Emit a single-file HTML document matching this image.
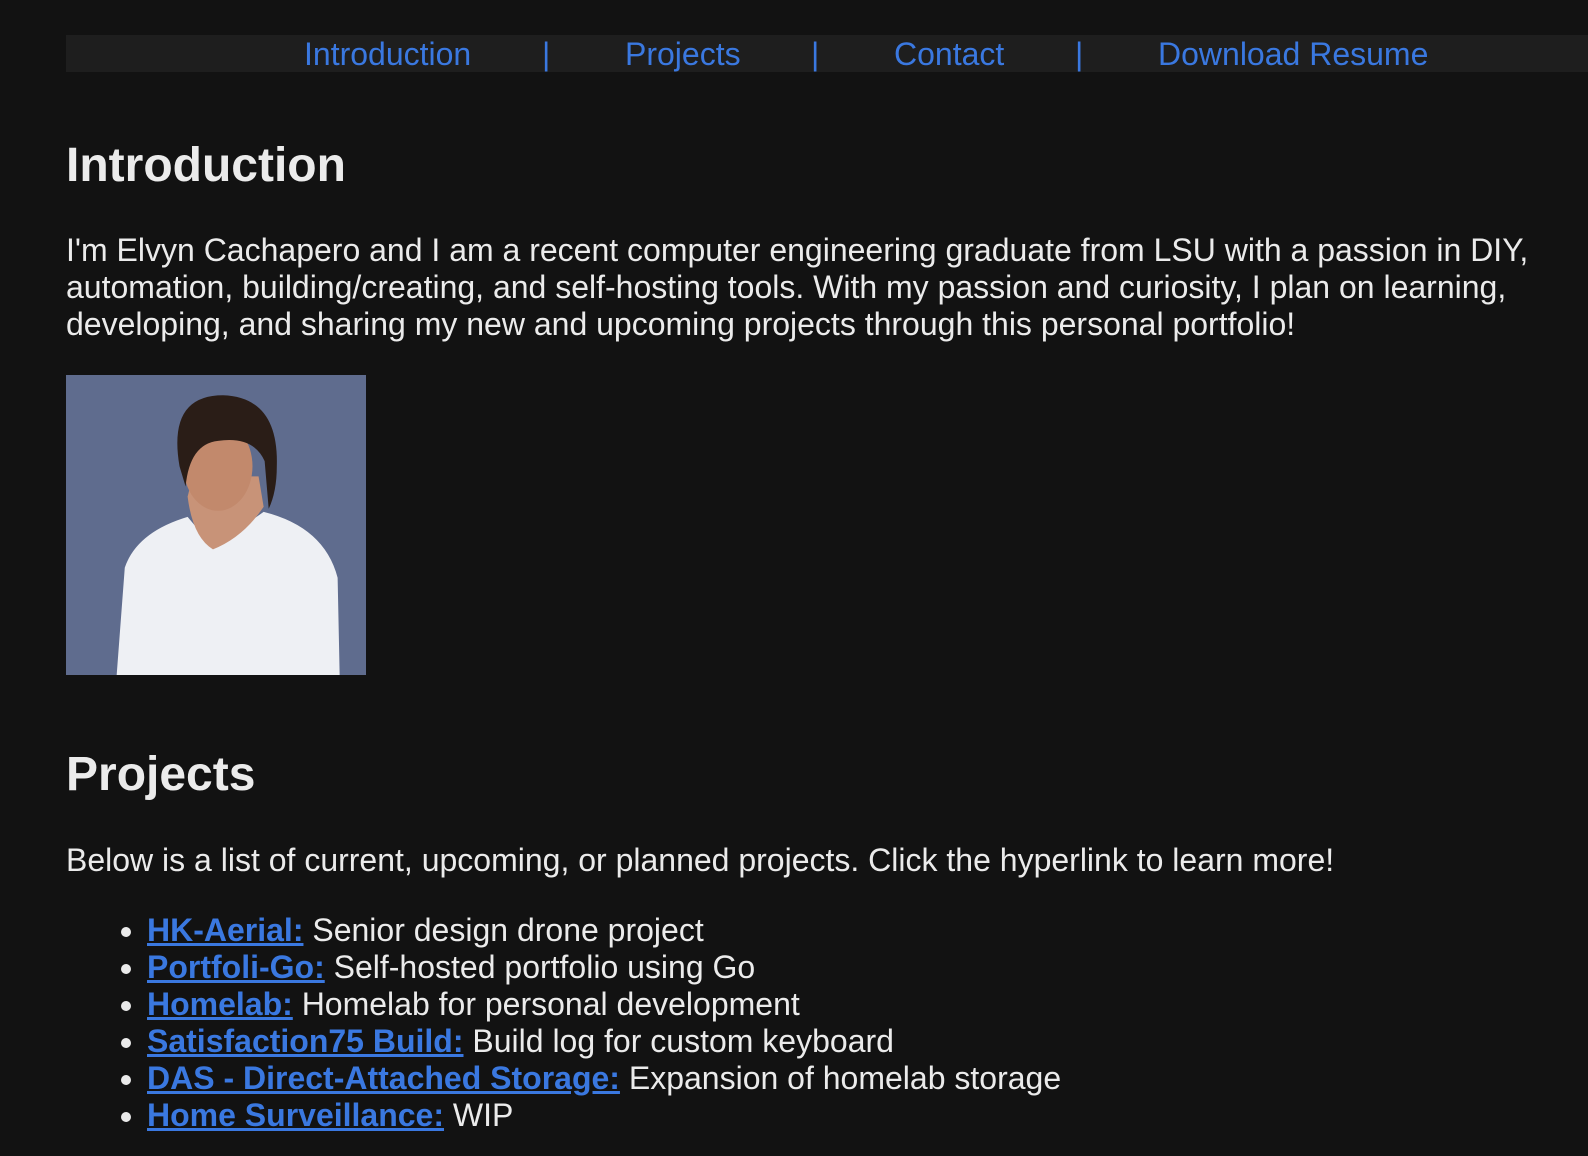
<!DOCTYPE html>
<html><head><meta charset="utf-8"><style>
body{margin:0;background:#121212;width:1588px;height:1156px;overflow:hidden;font-family:"Liberation Sans",Arial,sans-serif;color:#ebebeb;position:relative}
.a{position:absolute;white-space:nowrap}
.nav{position:absolute;left:66px;top:35px;width:1522px;height:37px;background:#1e1e1e}
.nl{color:#3a78e0;font-size:32px;top:36px}
h1{position:absolute;margin:0;font-size:48px;font-weight:bold;left:66px}
p{position:absolute;margin:0;left:66px;font-size:32px;line-height:37px}
ul{position:absolute;margin:0;padding:0 0 0 81px;left:66px;top:912px;font-size:32px;line-height:37px}
ul a{color:#3a78e0;font-weight:bold;text-decoration:underline}
</style></head><body>
<div class="nav"></div>
<div class="a nl" style="left:304px">Introduction</div>
<div class="a nl" style="left:542px">|</div>
<div class="a nl" style="left:625px">Projects</div>
<div class="a nl" style="left:811px">|</div>
<div class="a nl" style="left:894px">Contact</div>
<div class="a nl" style="left:1075px">|</div>
<div class="a nl" style="left:1158px">Download Resume</div>
<h1 style="top:138px">Introduction</h1>
<p style="top:232px;width:1470px">I'm Elvyn Cachapero and I am a recent computer engineering graduate from LSU with a passion in DIY, automation, building/creating, and self-hosting tools. With my passion and curiosity, I plan on learning, developing, and sharing my new and upcoming projects through this personal portfolio!</p>
<svg class="a" style="left:66px;top:375px" width="300" height="300" viewBox="0 0 296 296">
<rect width="296" height="296" fill="#5f6c8e"/>
<path d="M50 296 L58 190 Q70 155 120 140 L145 170 L195 135 Q255 150 268 200 L270 296Z" fill="#eef0f4"/>
<path d="M120 120 Q125 160 145 172 Q175 160 195 130 L190 100 L125 100Z" fill="#c89378"/>
<ellipse cx="150" cy="90" rx="34" ry="44" fill="#c2896c"/>
<path d="M112 90 Q100 20 155 20 Q210 22 208 90 Q208 115 200 132 L196 85 Q185 60 150 65 Q122 68 118 110Z" fill="#2a1d17"/>
</svg>
<h1 style="top:747px">Projects</h1>
<p style="top:842px">Below is a list of current, upcoming, or planned projects. Click the hyperlink to learn more!</p>
<ul>
<li><a>HK-Aerial:</a> Senior design drone project</li>
<li><a>Portfoli-Go:</a> Self-hosted portfolio using Go</li>
<li><a>Homelab:</a> Homelab for personal development</li>
<li><a>Satisfaction75 Build:</a> Build log for custom keyboard</li>
<li><a>DAS - Direct-Attached Storage:</a> Expansion of homelab storage</li>
<li><a>Home Surveillance:</a> WIP</li>
</ul>
</body></html>
